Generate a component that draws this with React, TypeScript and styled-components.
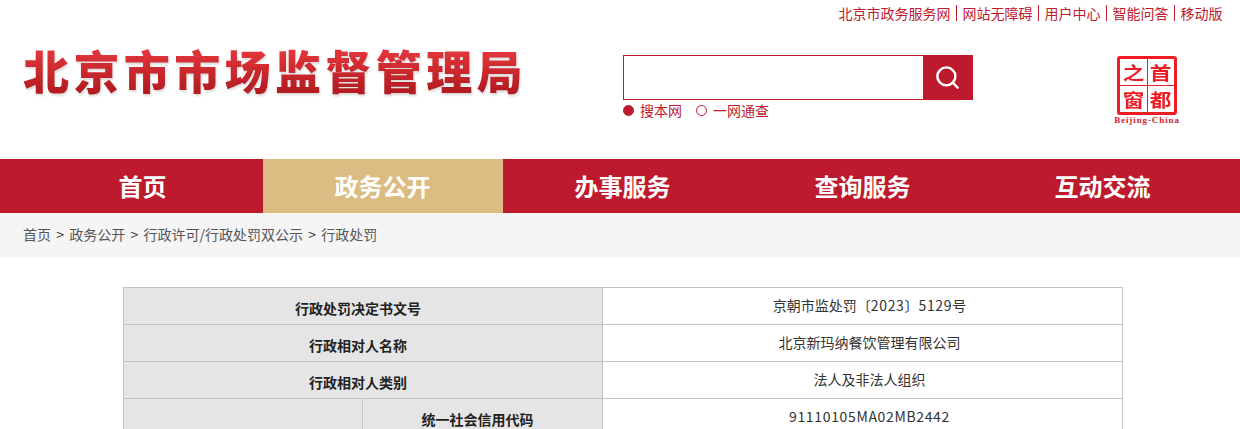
import React from "react";
import styled, { createGlobalStyle } from "styled-components";
import { Search } from "lucide-react";

const RED = "#bd1a2d";
const FONT = `"Noto Sans CJK SC", "Noto Sans", sans-serif`;

const GlobalStyle = createGlobalStyle`
    html, body {
        margin: 0;
        padding: 0;
        height: 429px;
        overflow: hidden;
        background: #fff;
        font-family: ${FONT};
    }
    * {
        box-sizing: border-box;
    }
`;

const TOP_LINKS = ["北京市政务服务网", "网站无障碍", "用户中心", "智能问答", "移动版"];
const NAV = ["首页", "政务公开", "办事服务", "查询服务", "互动交流"];
const CRUMBS = ["首页", "政务公开", "行政许可/行政处罚双公示", "行政处罚"];

const App = () => {
    return (
        <Page>
            <GlobalStyle />
            <TopBar>
                {TOP_LINKS.map((link, i) => (
                    <React.Fragment key={link}>
                        {i > 0 && <TopSep />}
                        <TopLink>{link}</TopLink>
                    </React.Fragment>
                ))}
            </TopBar>
            <Header>
                <Logo>北京市市场监督管理局</Logo>
                <SearchArea>
                    <SearchBox>
                        <SearchInput />
                        <SearchButton>
                            <Search size={27} color="#fff" strokeWidth={2.2} />
                        </SearchButton>
                    </SearchBox>
                    <RadioRow>
                        <RadioItem>
                            <RadioDot $on />
                            搜本网
                        </RadioItem>
                        <RadioItem>
                            <RadioDot />
                            一网通查
                        </RadioItem>
                    </RadioRow>
                </SearchArea>
                <Emblem>
                    <Seal>
                        <SealChar>之</SealChar>
                        <SealChar>首</SealChar>
                        <SealChar>窗</SealChar>
                        <SealChar>都</SealChar>
                    </Seal>
                    <SealCaption>Beijing-China</SealCaption>
                </Emblem>
            </Header>
            <Nav>
                {NAV.map((item) => (
                    <NavItem key={item} $active={item === "政务公开"}>
                        {item}
                    </NavItem>
                ))}
            </Nav>
            <Breadcrumb>
                {CRUMBS.map((c, i) => (
                    <React.Fragment key={c}>
                        {i > 0 && <CrumbSep>&gt;</CrumbSep>}
                        <span>{c}</span>
                    </React.Fragment>
                ))}
            </Breadcrumb>
            <Table>
                <colgroup>
                    <col width={239} />
                    <col width={240} />
                    <col width={520} />
                </colgroup>
                <tbody>
                    <tr>
                        <Th colSpan={2}>行政处罚决定书文号</Th>
                        <Td>
                            京朝市监处罚〔<Num>2023</Num>〕<Num>5129</Num>号
                        </Td>
                    </tr>
                    <tr>
                        <Th colSpan={2}>行政相对人名称</Th>
                        <Td>北京新玛纳餐饮管理有限公司</Td>
                    </tr>
                    <tr>
                        <Th colSpan={2}>行政相对人类别</Th>
                        <Td>法人及非法人组织</Td>
                    </tr>
                    <tr>
                        <Th />
                        <Th>统一社会信用代码</Th>
                        <Td>
                            <Num>91110105MA02MB2442</Num>
                        </Td>
                    </tr>
                </tbody>
            </Table>
        </Page>
    );
};

export default App;

const Page = styled.div`
    width: 1240px;
`;

const TopBar = styled.div`
    height: 28px;
    padding: 0 17.5px 2px 0;
    display: flex;
    justify-content: flex-end;
    align-items: center;
    font-size: 14px;
    color: ${RED};
`;

const TopLink = styled.span`
    line-height: 26px;
`;

const TopSep = styled.i`
    width: 1px;
    height: 16px;
    margin: 0 5.5px;
    background: ${RED};
`;

const Header = styled.div`
    height: 131px;
    display: flex;
    padding-left: 23px;
`;

const Logo = styled.h1`
    margin: 13px 0 0;
    width: 600px;
    height: 60px;
    font-size: 46px;
    line-height: 56px;
    font-weight: 900;
    letter-spacing: 4.4px;
    white-space: nowrap;
    background: linear-gradient(#e0343a 20%, #b51d22 80%);
    -webkit-background-clip: text;
    background-clip: text;
    color: transparent;
    filter: drop-shadow(1px 2px 1px rgba(0, 0, 0, 0.15));
`;

const SearchArea = styled.div`
    margin-top: 27px;
    width: 350px;
`;

const SearchBox = styled.div`
    display: flex;
    height: 45px;
    border: 1px solid ${RED};
`;

const SearchInput = styled.div`
    flex: 1;
`;

const SearchButton = styled.div`
    width: 49px;
    background: ${RED};
    display: flex;
    align-items: center;
    justify-content: center;
`;

const RadioRow = styled.div`
    display: flex;
    gap: 14px;
    margin-top: 0;
    font-size: 14px;
    line-height: 20px;
    color: ${RED};
`;

const RadioItem = styled.div`
    display: flex;
    align-items: center;
    gap: 6px;
`;

const RadioDot = styled.span<{ $on?: boolean }>`
    width: 11px;
    height: 11px;
    border-radius: 50%;
    border: 1.5px solid ${RED};
    background: ${(p) => (p.$on ? RED : "#fff")};
`;

const Emblem = styled.div`
    margin: 28px 0 0 141px;
    width: 66px;
    display: flex;
    flex-direction: column;
    align-items: center;
`;

const Seal = styled.div`
    width: 60px;
    height: 59px;
    border: 3px solid #ee1c25;
    border-radius: 3px;
    display: grid;
    grid-template-columns: 1fr 1fr;
    grid-template-rows: 1fr 1fr;
    background:
        linear-gradient(#ee1c25, #ee1c25) center / 1px 100% no-repeat,
        linear-gradient(#ee1c25, #ee1c25) center / 100% 1px no-repeat;
`;

const SealChar = styled.span`
    display: flex;
    align-items: center;
    justify-content: center;
    font-size: 18px;
    font-weight: 700;
    line-height: 1;
    color: #ee1c25;
    transform: scaleX(1.2);
`;

const SealCaption = styled.div`
    margin-top: 0;
    font-family: "Liberation Serif", serif;
    font-weight: 700;
    font-size: 9px;
    line-height: 10px;
    letter-spacing: 0.9px;
    color: #d8202a;
    white-space: nowrap;
`;

const Nav = styled.nav`
    height: 54px;
    padding-left: 23px;
    display: flex;
    background: ${RED};
`;

const NavItem = styled.div<{ $active?: boolean }>`
    width: 240px;
    padding-right: 1px;
    text-align: center;
    font-size: 24px;
    font-weight: 700;
    line-height: 54px;
    color: #fff;
    background: ${(p) => (p.$active ? "#dbbc82" : "transparent")};
`;

const Breadcrumb = styled.div`
    height: 44px;
    padding: 0 0 2px 23px;
    display: flex;
    align-items: center;
    background: #f5f5f5;
    font-size: 14px;
    color: #555;
`;

const CrumbSep = styled.span`
    margin: 0 5.25px;
    color: #333;
`;

const Table = styled.table`
    width: 999px;
    margin: 30px 0 0 123px;
    table-layout: fixed;
    border-collapse: collapse;
    font-size: 14px;
    color: #333;
    tr {
        height: 37px;
    }
`;

const Th = styled.td`
    border: 1px solid #c4c4c4;
    background: #e5e5e5;
    text-align: center;
    font-weight: 700;
    color: #222;
    padding: 3px 10px 0 0;
`;

const Td = styled.td`
    border: 1px solid #c4c4c4;
    text-align: center;
    padding: 0 0 2px 14px;
`;

const Num = styled.span`
    letter-spacing: 0.65px;
`;
